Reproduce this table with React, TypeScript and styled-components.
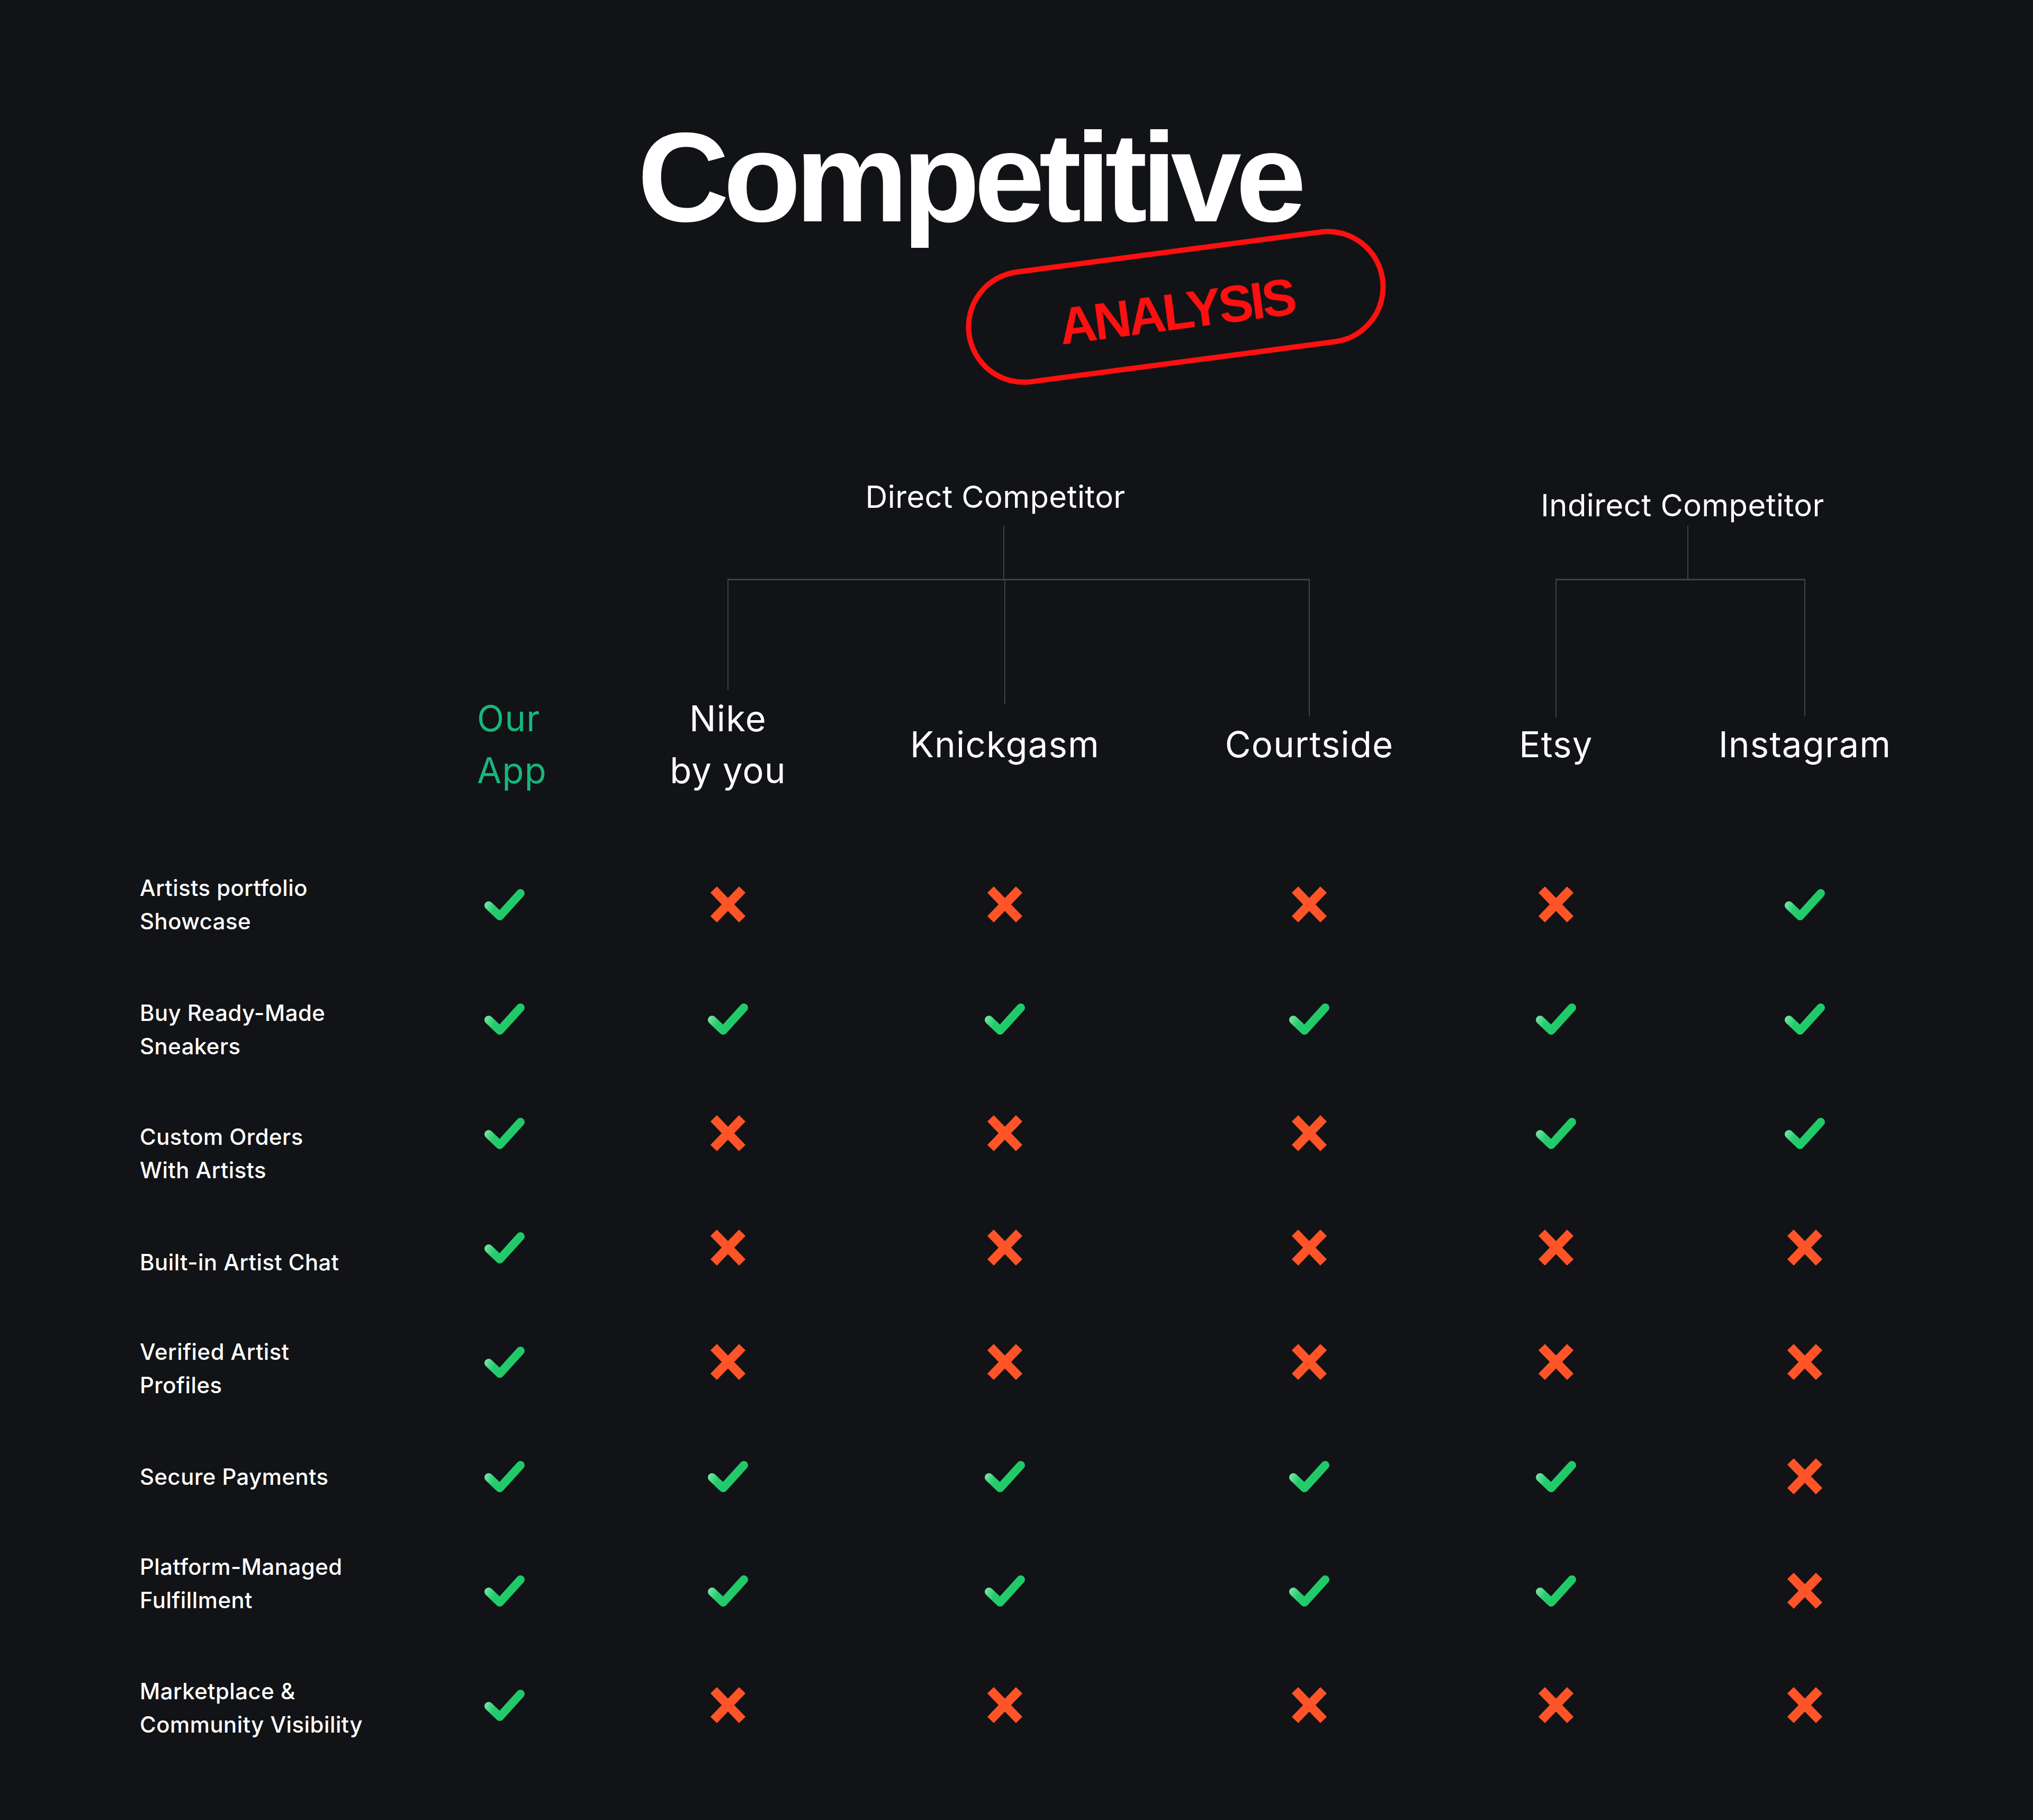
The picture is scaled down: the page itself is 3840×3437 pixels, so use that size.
import React from 'react';
import styled, { createGlobalStyle } from 'styled-components';

const BG = '#111316';
const LINE = '#3c4148';
const GREEN_TEXT = '#18b67c';
const RED = '#ff1010';

// Column widths are picked so each column's center lines up with the icons
const COLS = [478, 422, 422, 624, 526, 406, 534];
const TEMPLATE = COLS.map((w) => `${w}px`).join(' ');

const GlobalStyle = createGlobalStyle`
    html, body {
        margin: 0;
        padding: 0;
        background: ${BG};
    }
    body {
        font-family: Inter, "Noto Sans", sans-serif;
        color: #ffffff;
    }
`;

type Competitor = { name: string[]; accent?: boolean; leg: number; offset?: number };
type Feature = { label: string[]; marks: number[]; shift: number };

const competitors: Competitor[] = [
    { name: ['Our', 'App'], accent: true, leg: 0, offset: 14 },
    { name: ['Nike', 'by you'], leg: 207 },
    { name: ['Knickgasm'], leg: 234 },
    { name: ['Courtside'], leg: 257 },
    { name: ['Etsy'], leg: 259 },
    { name: ['Instagram'], leg: 257 },
];

const features: Feature[] = [
    { label: ['Artists portfolio', 'Showcase'], marks: [1, 0, 0, 0, 0, 1], shift: 0 },
    { label: ['Buy Ready-Made', 'Sneakers'], marks: [1, 1, 1, 1, 1, 1], shift: 20 },
    { label: ['Custom Orders', 'With Artists'], marks: [1, 0, 0, 0, 1, 1], shift: 38 },
    { label: ['Built-in Artist Chat'], marks: [1, 0, 0, 0, 0, 0], shift: 27 },
    { label: ['Verified Artist', 'Profiles'], marks: [1, 0, 0, 0, 0, 0], shift: 12 },
    { label: ['Secure Payments'], marks: [1, 1, 1, 1, 1, 0], shift: 0 },
    { label: ['Platform-Managed', 'Fulfillment'], marks: [1, 1, 1, 1, 1, 0], shift: -14 },
    { label: ['Marketplace &', 'Community Visibility'], marks: [1, 0, 0, 0, 0, 0], shift: 5 },
];

// grouped competitor brackets
const groups = [
    { title: 'Direct Competitor', col: '3 / 6', top: 0, headLeft: 366, gap: 20, stemShift: 16, barL: 210, barR: 262 },
    { title: 'Indirect Competitor', col: '6 / 8', top: 16, headLeft: 92, gap: 4, stemShift: 10, barL: 202, barR: 266 },
];

const CheckIcon: React.FC = () => (
    <svg width="80" height="62" viewBox="0 0 80 62" fill="none">
        <defs>
            <linearGradient id="checkGrad" x1="0" y1="0" x2="1" y2="0.4">
                <stop offset="0" stopColor="#86eab0" />
                <stop offset="0.38" stopColor="#25cc6e" />
                <stop offset="1" stopColor="#1fc966" />
            </linearGradient>
        </defs>
        <path
            d="M10 33 L31 53 L70 10"
            stroke="url(#checkGrad)"
            strokeWidth="16"
            strokeLinecap="round"
            strokeLinejoin="round"
        />
    </svg>
);

const CrossIcon: React.FC = () => (
    <svg width="66" height="68" viewBox="0 0 66 68" fill="none">
        <path d="M6 6 L60 62 M60 6 L6 62" stroke="#ff5427" strokeWidth="17" strokeLinecap="butt" />
    </svg>
);

const App: React.FC = () => {
    return (
        <Page>
            <GlobalStyle />
            <Hero>
                <Title>Competitive</Title>
                <Badge>
                    <BadgeText>ANALYSIS</BadgeText>
                </Badge>
            </Hero>

            <HeaderGrid>
                {groups.map((g) => (
                    <Group key={g.title} $col={g.col} $top={g.top}>
                        <GroupHead $left={g.headLeft}>
                            <GroupLabel $gap={g.gap}>{g.title}</GroupLabel>
                            <Stem $shift={g.stemShift} />
                        </GroupHead>
                        <Bar $left={g.barL} $right={g.barR} />
                    </Group>
                ))}

                <HeaderSpacer />
                {competitors.map((c) => (
                    <HeaderCell key={c.name.join(' ')}>
                        <Leg $h={c.leg} />
                        <NameBox>
                            <Name $accent={c.accent} $offset={c.offset ?? 0}>
                                {c.name.map((line) => (
                                    <div key={line}>{line}</div>
                                ))}
                            </Name>
                        </NameBox>
                    </HeaderCell>
                ))}
            </HeaderGrid>

            <Body>
                {features.map((f) => (
                    <Row key={f.label.join(' ')}>
                        <FeatureLabel $shift={f.shift}>
                            {f.label.map((line) => (
                                <div key={line}>{line}</div>
                            ))}
                        </FeatureLabel>
                        {f.marks.map((m, i) => (
                            <Mark key={i}>{m ? <CheckIcon /> : <CrossIcon />}</Mark>
                        ))}
                    </Row>
                ))}
            </Body>
        </Page>
    );
};

export default App;

const Page = styled.div`
    width: 3840px;
    min-height: 3437px;
    box-sizing: border-box;
    padding-top: 215px;
    background: ${BG};
    overflow: hidden;
`;

const Hero = styled.div`
    width: 1432px;
    margin: 0 auto;
    padding-right: 16px;
    box-sizing: border-box;
    display: flex;
    flex-direction: column;
    align-items: flex-start;
`;

const Title = styled.h1`
    margin: 0;
    font-family: "Liberation Sans", Arial, sans-serif;
    font-weight: 700;
    font-size: 240px;
    line-height: 240px;
    letter-spacing: -11px;
    color: #ffffff;
`;

const Badge = styled.div`
    align-self: flex-end;
    margin-top: 15px;
    width: 798px;
    height: 219px;
    box-sizing: border-box;
    border: 10px solid ${RED};
    border-radius: 110px;
    display: flex;
    align-items: center;
    justify-content: center;
    transform: rotate(-7.5deg);
`;

const BadgeText = styled.span`
    padding-top: 16px;
    font-family: "Liberation Sans", Arial, sans-serif;
    font-weight: 700;
    font-size: 98px;
    line-height: 1;
    letter-spacing: -5px;
    color: ${RED};
`;

const Grid = styled.div`
    display: grid;
    grid-template-columns: ${TEMPLATE};
    padding-left: 264px;
`;

const HeaderGrid = styled(Grid)`
    margin-top: 214px;
    grid-template-rows: auto auto;
`;

const Group = styled.div<{ $col: string; $top: number }>`
    grid-row: 1;
    grid-column: ${({ $col }) => $col};
    display: flex;
    flex-direction: column;
    align-items: flex-start;
    padding-top: ${({ $top }) => $top}px;
`;

const GroupHead = styled.div<{ $left: number }>`
    width: 700px;
    margin-left: ${({ $left }) => $left}px;
    display: flex;
    flex-direction: column;
    align-items: center;
`;

const GroupLabel = styled.div<{ $gap: number }>`
    font-size: 58px;
    line-height: 70px;
    font-weight: 400;
    letter-spacing: 0.4px;
    white-space: nowrap;
    margin-bottom: ${({ $gap }) => $gap}px;
`;

const Stem = styled.div<{ $shift: number }>`
    width: 2px;
    height: 100px;
    background: ${LINE};
    margin-left: ${({ $shift }) => $shift * 2}px;
`;

const Bar = styled.div<{ $left: number; $right: number }>`
    align-self: stretch;
    height: 3px;
    background: ${LINE};
    margin-left: ${({ $left }) => $left}px;
    margin-right: ${({ $right }) => $right}px;
`;

const HeaderSpacer = styled.div`
    grid-row: 2;
    grid-column: 1;
`;

const HeaderCell = styled.div`
    grid-row: 2;
    display: flex;
    flex-direction: column;
    align-items: center;
`;

const Leg = styled.div<{ $h: number }>`
    width: 2px;
    height: ${({ $h }) => $h}px;
    margin-bottom: ${({ $h }) => 212 - $h}px;
    background: ${({ $h }) => ($h ? LINE : 'transparent')};
`;

const NameBox = styled.div`
    height: 196px;
    display: flex;
    align-items: center;
    justify-content: center;
`;

const Name = styled.div<{ $accent?: boolean; $offset: number }>`
    font-size: 67px;
    line-height: 98px;
    font-weight: 400;
    letter-spacing: 1.2px;
    white-space: nowrap;
    text-align: ${({ $accent }) => ($accent ? 'left' : 'center')};
    color: ${({ $accent }) => ($accent ? GREEN_TEXT : '#ffffff')};
    margin-left: ${({ $offset }) => $offset * 2}px;
`;

const Body = styled.div`
    margin-top: 96px;
    padding-bottom: 109px;
`;

const Row = styled(Grid)`
    height: 216px;
    align-items: center;
`;

const FeatureLabel = styled.div<{ $shift: number }>`
    font-size: 42px;
    line-height: 63px;
    font-weight: 500;
    letter-spacing: 0.4px;
    color: #ffffff;
    margin-top: ${({ $shift }) => Math.max($shift, 0) * 2}px;
    margin-bottom: ${({ $shift }) => Math.max(-$shift, 0) * 2}px;
`;

const Mark = styled.div`
    display: flex;
    align-items: center;
    justify-content: center;
`;
